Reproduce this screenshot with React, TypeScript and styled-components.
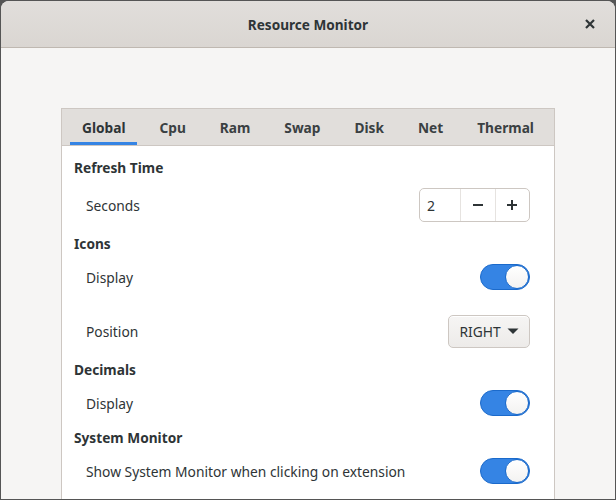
import React from "react";
import styled, { createGlobalStyle } from "styled-components";

const Global = createGlobalStyle`
  html, body { margin: 0; padding: 0; }
  body {
    background: #555555;
    width: 616px;
    height: 500px;
    overflow: hidden;
    font-family: "Noto Sans", "DejaVu Sans", sans-serif;
    color: #2e3436;
  }
  #root { padding: 1px; box-sizing: border-box; height: 500px; }
`;

const Window = styled.div`
  height: 498px;
  background: #f6f5f4;
  border-radius: 8px 8px 0 0;
  overflow: hidden;
  display: flex;
  flex-direction: column;
`;

const HeaderBar = styled.header`
  height: 46px;
  flex: none;
  border-bottom: 1px solid #bfb8b1;
  background: linear-gradient(to bottom, #e1dedb, #dad6d2);
  display: flex;
  align-items: center;
  justify-content: center;
  position: relative;
`;

const Title = styled.h1`
  margin: 0;
  font-size: 13.6px;
  font-weight: 700;
  color: #2e3436;
`;

const CloseButton = styled.button`
  position: absolute;
  right: 13px;
  top: 11px;
  width: 24px;
  height: 24px;
  border: none;
  background: transparent;
  padding: 0;
  display: flex;
  align-items: center;
  justify-content: center;
`;

const Content = styled.main`
  flex: 1;
  padding: 60px 60px 0;
  overflow: hidden;
`;

const Notebook = styled.section`
  border: 1px solid #cdc7c2;
  border-bottom: none;
  background: #ffffff;
  height: 420px;
`;

const TabBar = styled.nav`
  height: 36px;
  background: #e1dedb;
  border-bottom: 1px solid #cdc7c2;
  display: flex;
  padding-left: 8px;
  gap: 10px;
`;

const Tab = styled.div<{ $active?: boolean }>`
  padding: 0 12px;
  display: flex;
  align-items: center;
  font-size: 13.7px;
  font-weight: 700;
  color: ${(p) => (p.$active ? "#2e3436" : "#3a4042")};
  box-shadow: ${(p) => (p.$active ? "inset 0 -3px 0 #3584e4" : "none")};
`;

const Page = styled.div`
  padding: 12px 24px 0 12px;
  display: flex;
  flex-direction: column;
  gap: 12px;
`;

const SectionTitle = styled.div`
  height: 18px;
  line-height: 20px;
  font-size: 13.7px;
  font-weight: 700;
`;

const Row = styled.div<{ $h: number; $extra?: number }>`
  height: ${(p) => p.$h}px;
  margin-top: ${(p) => p.$extra ?? 0}px;
  padding-left: 12px;
  display: flex;
  align-items: center;
  justify-content: space-between;
  font-size: 13.8px;
`;

const Spin = styled.div`
  width: 109px;
  height: 32px;
  border: 1px solid #cdc7c2;
  border-radius: 5px;
  display: flex;
  background: #ffffff;
`;

const SpinEntry = styled.div`
  width: 40px;
  padding-left: 7px;
  box-sizing: border-box;
  display: flex;
  align-items: center;
  font-size: 14px;
`;

const SpinBtn = styled.div`
  flex: 1;
  border-left: 1px solid #e6e3e0;
  display: flex;
  align-items: center;
  justify-content: center;
`;

const Switch = styled.div<{ $on?: boolean }>`
  width: 48px;
  height: 24px;
  border-radius: 13px;
  border: 1px solid ${(p) => (p.$on ? "#1b6acb" : "#cdc7c2")};
  background: ${(p) => (p.$on ? "#3584e4" : "#e1dedb")};
  display: flex;
  justify-content: ${(p) => (p.$on ? "flex-end" : "flex-start")};
  align-items: center;
`;

const Knob = styled.div`
  width: 24px;
  height: 24px;
  box-sizing: border-box;
  border-radius: 50%;
  background: linear-gradient(to bottom, #ffffff, #f3f2f1);
  border: 1px solid #1b6acb;
`;

const Dropdown = styled.div`
  width: 80px;
  height: 31px;
  border: 1px solid #cdc7c2;
  border-radius: 5px;
  background: linear-gradient(to bottom, #f6f5f4, #edebe9);
  box-shadow: inset 0 1px #ffffff;
  display: flex;
  align-items: center;
  justify-content: center;
  gap: 6px;
  font-size: 13.8px;
`;

const Minus = () => (
  <svg width="12" height="12" viewBox="0 0 12 12">
    <rect x="1" y="5" width="10" height="2" fill="#2e3436" />
  </svg>
);
const Plus = () => (
  <svg width="12" height="12" viewBox="0 0 12 12">
    <rect x="1" y="5" width="10" height="2" fill="#2e3436" />
    <rect x="5" y="1" width="2" height="10" fill="#2e3436" />
  </svg>
);
const Caret = () => (
  <svg width="12" height="7" viewBox="0 0 12 7">
    <polygon points="0.5,0.5 11.5,0.5 6,6" fill="#2e3436" />
  </svg>
);
const CloseIcon = () => (
  <svg width="12" height="12" viewBox="0 0 12 12">
    <path d="M2 2 L10 10 M10 2 L2 10" stroke="#2e3436" strokeWidth="2.2" strokeLinecap="butt" />
  </svg>
);

const tabs = ["Global", "Cpu", "Ram", "Swap", "Disk", "Net", "Thermal"];

export default function App() {
  return (
    <>
      <Global />
      <Window>
        <HeaderBar>
          <Title>Resource Monitor</Title>
          <CloseButton aria-label="Close">
            <CloseIcon />
          </CloseButton>
        </HeaderBar>
        <Content>
          <Notebook>
            <TabBar>
              {tabs.map((t, i) => (
                <Tab key={t} $active={i === 0}>
                  {t}
                </Tab>
              ))}
            </TabBar>
            <Page>
              <SectionTitle>Refresh Time</SectionTitle>
              <Row $h={34}>
                <span>Seconds</span>
                <Spin>
                  <SpinEntry>2</SpinEntry>
                  <SpinBtn>
                    <Minus />
                  </SpinBtn>
                  <SpinBtn>
                    <Plus />
                  </SpinBtn>
                </Spin>
              </Row>
              <SectionTitle>Icons</SectionTitle>
              <Row $h={26}>
                <span>Display</span>
                <Switch $on>
                  <Knob />
                </Switch>
              </Row>
              <Row $h={33} $extra={13}>
                <span>Position</span>
                <Dropdown>
                  <span>RIGHT</span>
                  <Caret />
                </Dropdown>
              </Row>
              <SectionTitle>Decimals</SectionTitle>
              <Row $h={26}>
                <span>Display</span>
                <Switch $on>
                  <Knob />
                </Switch>
              </Row>
              <SectionTitle>System Monitor</SectionTitle>
              <Row $h={26}>
                <span>Show System Monitor when clicking on extension</span>
                <Switch $on>
                  <Knob />
                </Switch>
              </Row>
            </Page>
          </Notebook>
        </Content>
      </Window>
    </>
  );
}
